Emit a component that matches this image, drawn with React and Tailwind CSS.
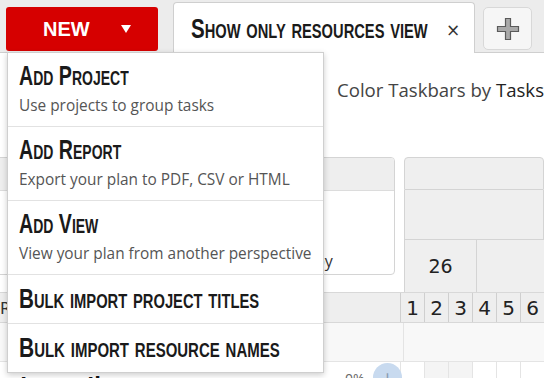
import React from "react";

function Cond({ children, scale = "scale-x-[0.7]", className = "" }) {
  return (
    <span className={"inline-block origin-left whitespace-nowrap font-bold text-[28px] text-[#1a1a1a] [font-variant:small-caps] [font-family:'Liberation_Sans',Arial,sans-serif] " + scale + " " + className}>
      {children}
    </span>
  );
}

function Item({ title, sub, last, scale }) {
  return (
    <div className={"px-[11px] " + (sub ? "h-[74px] pt-[8px]" : "h-[49px] pt-[9px]") + (last ? "" : " border-b border-[#e2e2e2]")}>
      <div className="h-[30px] leading-[30px]">
        <Cond scale={scale}>{title}</Cond>
      </div>
      {sub && (
        <div className="mt-[5px] text-[15.4px] leading-[20px] text-[#555] whitespace-nowrap [font-family:'Open_Sans',sans-serif]">{sub}</div>
      )}
    </div>
  );
}

export default function App() {
  return (
    <div className="relative w-[544px] h-[378px] overflow-hidden bg-white [font-family:'Open_Sans',sans-serif]">
      {/* top bar */}
      <div className="flex h-[53px] bg-[#ececec] border-b border-[#cfcfcf]">
        <div className="ml-[6px] mt-[7px] w-[152px] h-[44px] rounded-[3px] bg-[#d60000] flex items-center text-white">
          <span className="ml-[37px] text-[20px] font-bold [font-family:'Liberation_Sans',Arial,sans-serif]">NEW</span>
          <svg className="ml-[31px]" width="10" height="9" viewBox="0 0 10 9"><path d="M0 0 L10 0 L5 8 Z" fill="#fff" /></svg>
        </div>
        <div className="ml-[15px] mt-[2px] mb-[-1px] w-[302px] h-[51px] bg-white border border-b-0 border-[#cfcfcf] rounded-t-[4px] flex items-center relative">
          <div className="ml-[17px] h-[30px] leading-[30px] mt-[2px]">
            <Cond scale="scale-x-[0.734]">Show only resources view</Cond>
          </div>
          <span className="absolute left-[272px] top-[15px] text-[17px] text-[#333] [font-family:'DejaVu_Sans',sans-serif]">×</span>
        </div>
        <div className="ml-[8px] mt-[7px] w-[49px] h-[43px] bg-[#f6f6f6] border border-[#d8d8d8] rounded-[5px] flex items-center justify-center">
          <svg width="24" height="24" viewBox="0 0 24 24">
            <path d="M9.5 1.5 H14.5 V9.5 H22.5 V14.5 H14.5 V22.5 H9.5 V14.5 H1.5 V9.5 H9.5 Z" fill="#a9a9a9" stroke="#5a5a5a" strokeWidth="1.2" />
          </svg>
        </div>
      </div>

      {/* content */}
      <div className="h-[104px] pl-[337px] pt-[23px] text-[18.6px] text-[#444] whitespace-nowrap">
        Color Taskbars by <span className="text-[#222]">Tasks</span>
      </div>

      <div className="flex h-[135px]">
        <div className="ml-[-10px] w-[405px] h-[118px] border border-[#d4d4d4] rounded-[4px] overflow-hidden">
          <div className="h-[33px] bg-[#eeeeee] border-b border-[#dcdcdc]" />
          <div className="pt-[58px] pl-[324px] text-[16px] text-[#333]">by</div>
        </div>
        <div className="ml-[9px] flex-1 flex flex-col">
          <div className="h-[33px] bg-[#efefef] border border-[#d4d4d4] rounded-t-[4px]" />
          <div className="h-[50px] bg-[#efefef] border border-t-0 border-[#d4d4d4]" />
          <div className="h-[52px] flex">
            <div className="w-[73px] bg-[#efefef] border-l border-r border-[#d4d4d4] flex items-end justify-center pb-[12px] text-[19px] text-[#222] [font-family:'DejaVu_Sans',sans-serif]">26</div>
            <div className="flex-1 bg-[#efefef]" />
          </div>
        </div>
      </div>

      <div className="flex h-[31px] bg-[#eeeeee] border-b border-t border-[#d8d8d8]">
        <div className="w-[404px] text-[16px] text-[#333] pt-[4px] [font-family:'DejaVu_Sans',sans-serif]">R</div>
        <div className="flex-1 flex">
          {[1, 2, 3, 4, 5, 6].map((d) => (
            <div key={d} className="w-[24px] shrink-0 border-l border-[#cfcfcf] flex items-center justify-center text-[20px] text-[#222] [font-family:'DejaVu_Sans',sans-serif]">{d}</div>
          ))}
        </div>
      </div>

      <div className="flex h-[39px] bg-[#f8f8f8] border-b border-[#e4e4e4]">
        <div className="w-[404px] border-r border-[#e4e4e4]" />
      </div>

      <div className="flex h-[30px]">
        <div className="w-[404px] relative">
          <div className="absolute left-[20px] top-[5px] text-[22px] font-bold text-[#111] whitespace-nowrap">Lasso Ilamaurus</div>
          <div className="absolute left-[345px] top-[6px] text-[14px] text-[#666]">0%</div>
          <div className="absolute left-[373px] top-[1px] w-[29px] h-[29px] rounded-full bg-[#c8daef] flex items-center justify-center text-[#8a9bb0] text-[20px]">+</div>
        </div>
        <div className="flex-1 flex">
          {[0, 1, 2, 3, 4, 5].map((d) => (
            <div key={d} className={"w-[24px] shrink-0 border-l border-[#e4e4e4] " + (d === 1 || d === 2 ? "bg-[#f4f4f4]" : "")} />
          ))}
        </div>
      </div>

      {/* dropdown menu */}
      <div className="absolute left-[7px] top-[52px] w-[317px] h-[321px] bg-white border border-[#cfcfcf] shadow-[0_2px_6px_rgba(0,0,0,0.2)]">
        <Item title="Add Project" sub="Use projects to group tasks" />
        <Item title="Add Report" sub="Export your plan to PDF, CSV or HTML" />
        <Item title="Add View" sub="View your plan from another perspective" />
        <Item title="Bulk import project titles" scale="scale-x-[0.737]" />
        <Item title="Bulk import resource names" scale="scale-x-[0.749]" last />
      </div>
    </div>
  );
}
